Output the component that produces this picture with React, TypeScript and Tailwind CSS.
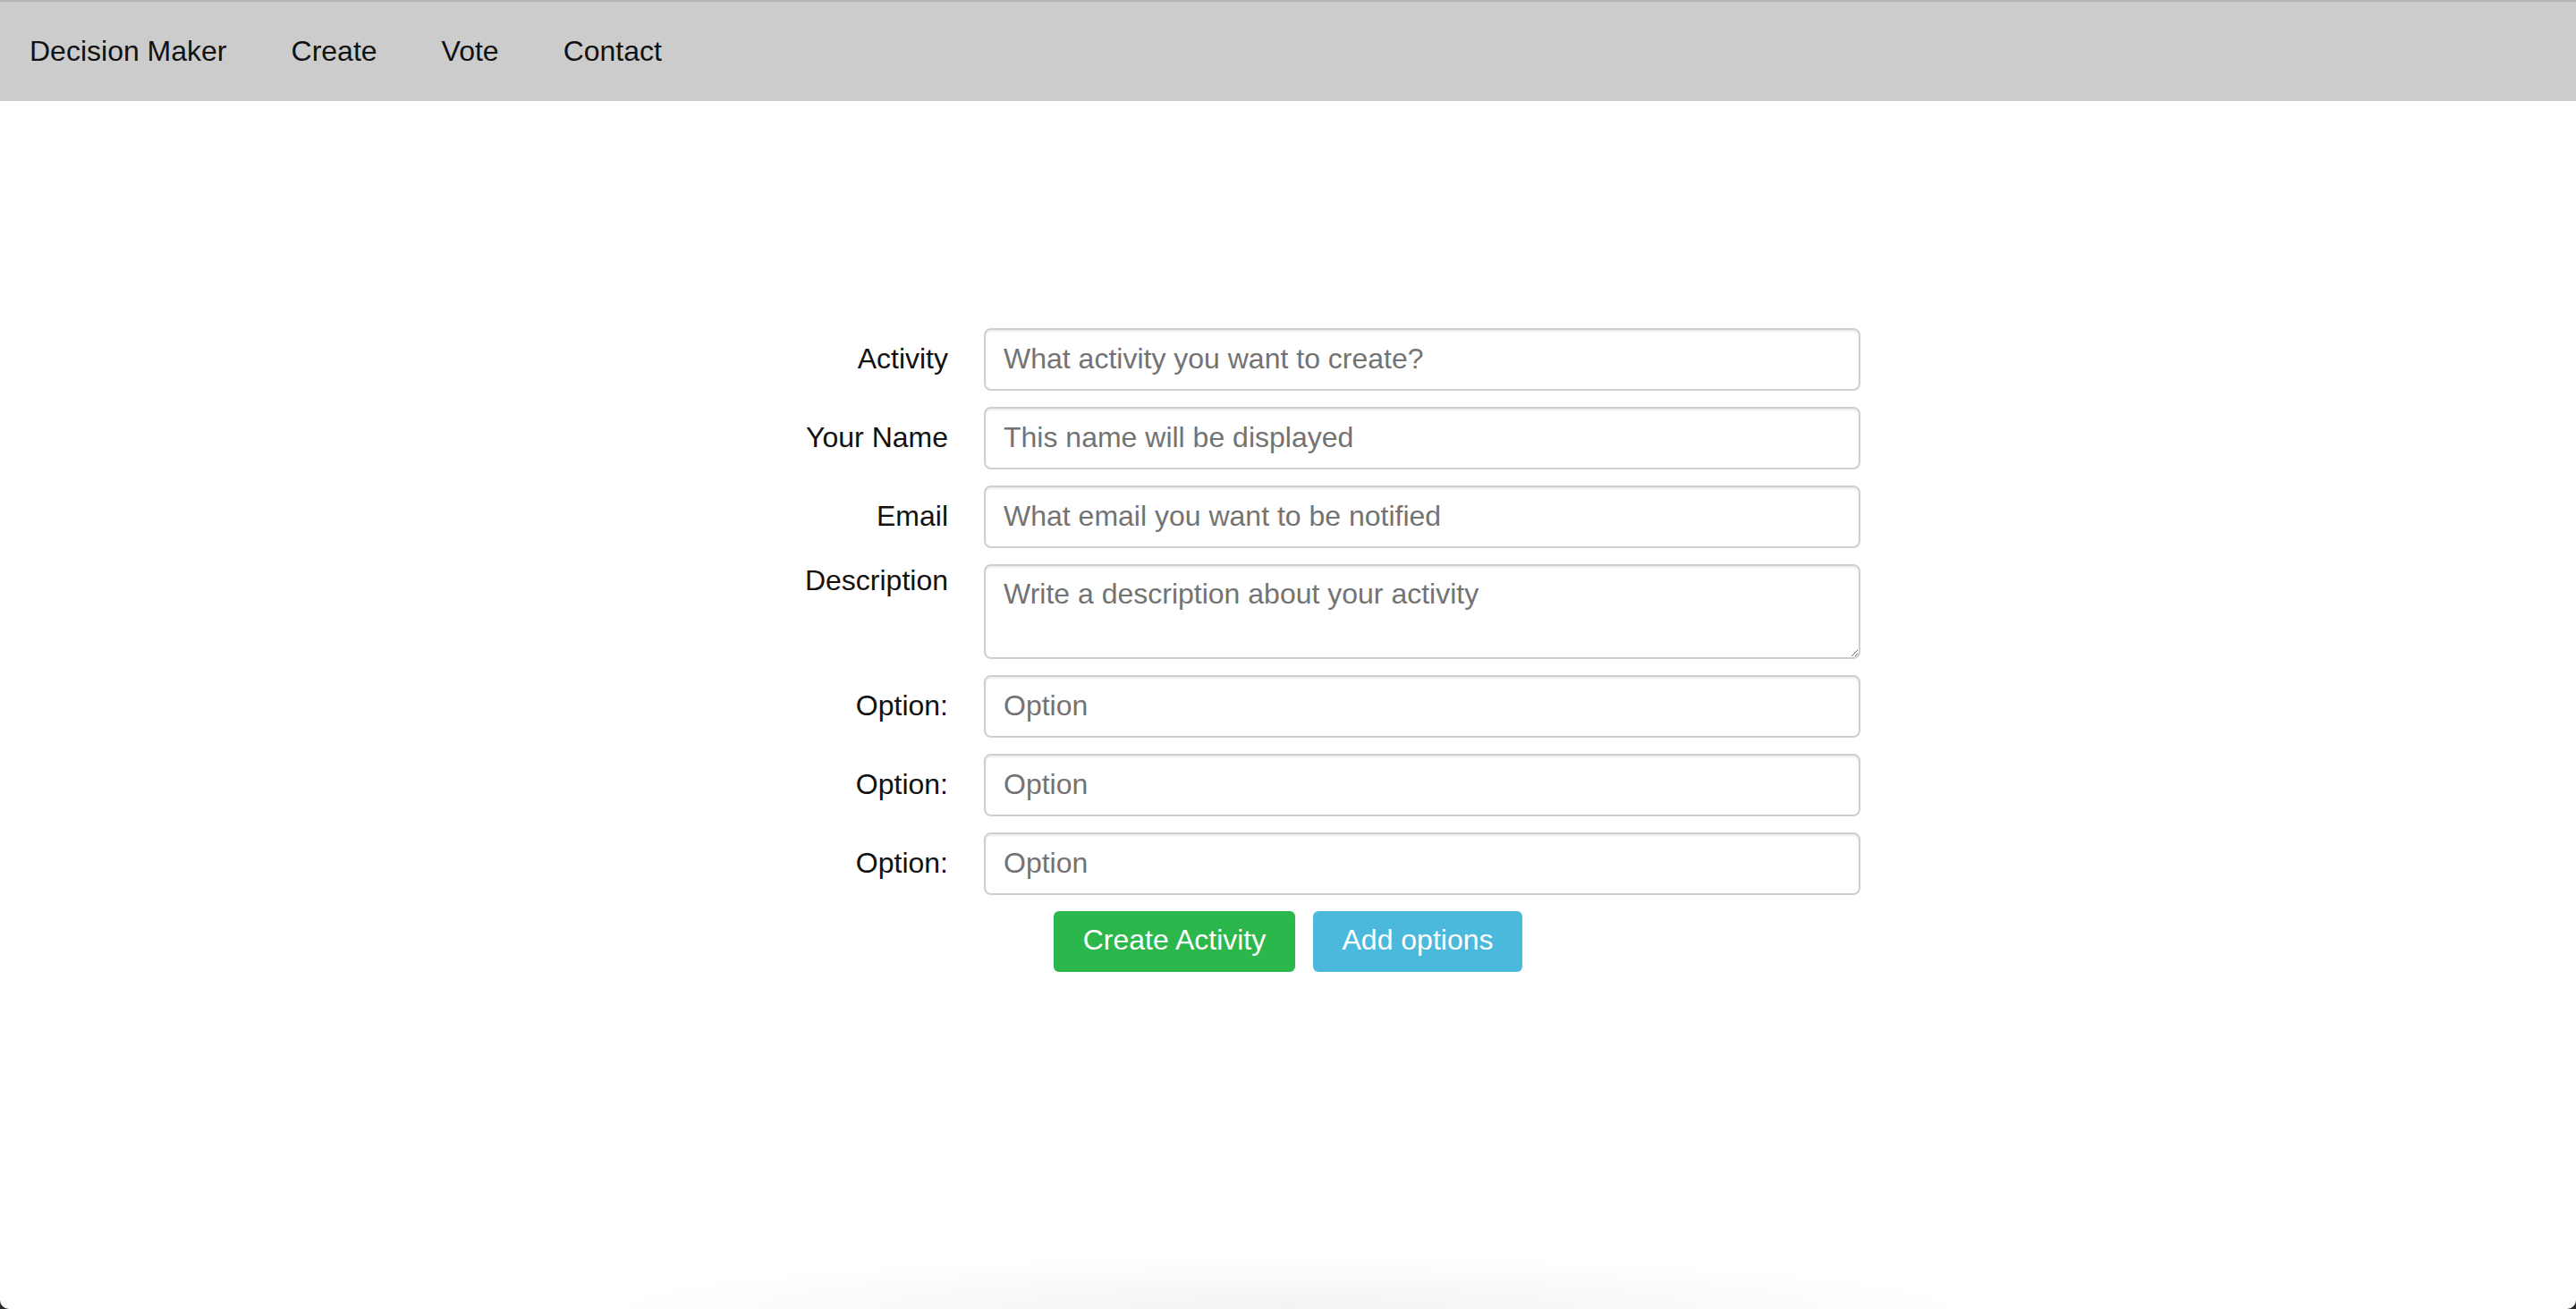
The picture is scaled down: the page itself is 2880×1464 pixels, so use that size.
import React from "react";

const font = { fontFamily: '"Liberation Sans", Arial, Helvetica, sans-serif' };

function Field({ label, placeholder }: { label: string; placeholder: string }) {
  return (
    <>
      <label className="flex h-[70px] items-center justify-end pb-[2px] text-[32px] text-[#111]">{label}</label>
      <input
        type="text"
        placeholder={placeholder}
        className="h-[70px] w-full rounded-[8px] border-2 border-[#cfcfcf] bg-white px-[20px] pb-[2px] text-[32px] text-[#333] shadow-[inset_0_2px_2px_rgba(0,0,0,0.075)] outline-none placeholder:text-[#737373]"
      />
    </>
  );
}

export default function App() {
  return (
    <div className="min-h-screen bg-[#2a2a2a]" style={font}>
      <div className="flex min-h-[1464px] flex-col overflow-hidden rounded-b-[10px] bg-white">
        <nav className="flex h-[113px] items-center gap-[72px] border-t-2 border-[#b4b4b4] bg-[#cccccc] pb-[2px] pl-[33px] text-[32px] text-[#111]">
          <a href="#" className="leading-none">Decision Maker</a>
          <a href="#" className="leading-none">Create</a>
          <a href="#" className="leading-none">Vote</a>
          <a href="#" className="leading-none">Contact</a>
        </nav>

        <form className="mx-auto mt-[254px] grid w-[1280px] grid-cols-[260px_980px] gap-x-[40px] gap-y-[18px]">
          <Field label="Activity" placeholder="What activity you want to create?" />
          <Field label="Your Name" placeholder="This name will be displayed" />
          <Field label="Email" placeholder="What email you want to be notified" />
          <label className="flex justify-end text-[32px] leading-[36px] text-[#111]">Description</label>
          <textarea
            placeholder="Write a description about your activity"
            className="h-[106px] w-full rounded-[8px] border-2 border-[#cfcfcf] bg-white px-[20px] pt-[11px] text-[32px] leading-[40px] text-[#333] shadow-[inset_0_2px_2px_rgba(0,0,0,0.075)] outline-none placeholder:text-[#737373]"
          />
          <Field label="Option:" placeholder="Option" />
          <Field label="Option:" placeholder="Option" />
          <Field label="Option:" placeholder="Option" />
          <div />
          <div className="ml-[78px] flex gap-[20px]">
            <button
              type="button"
              className="h-[68px] w-[270px] rounded-[6px] bg-[#2bb74b] pb-[4px] text-[32px] text-white"
            >
              Create Activity
            </button>
            <button
              type="button"
              className="h-[68px] w-[234px] rounded-[6px] bg-[#4bb9dc] pb-[4px] text-[32px] text-white"
            >
              Add options
            </button>
          </div>
        </form>

        <div className="flex-1" />
        <div className="mx-auto h-[60px] w-[1560px] bg-[radial-gradient(ellipse_at_bottom,#f3f3f3_0%,rgba(255,255,255,0)_70%)]" />
      </div>
    </div>
  );
}
